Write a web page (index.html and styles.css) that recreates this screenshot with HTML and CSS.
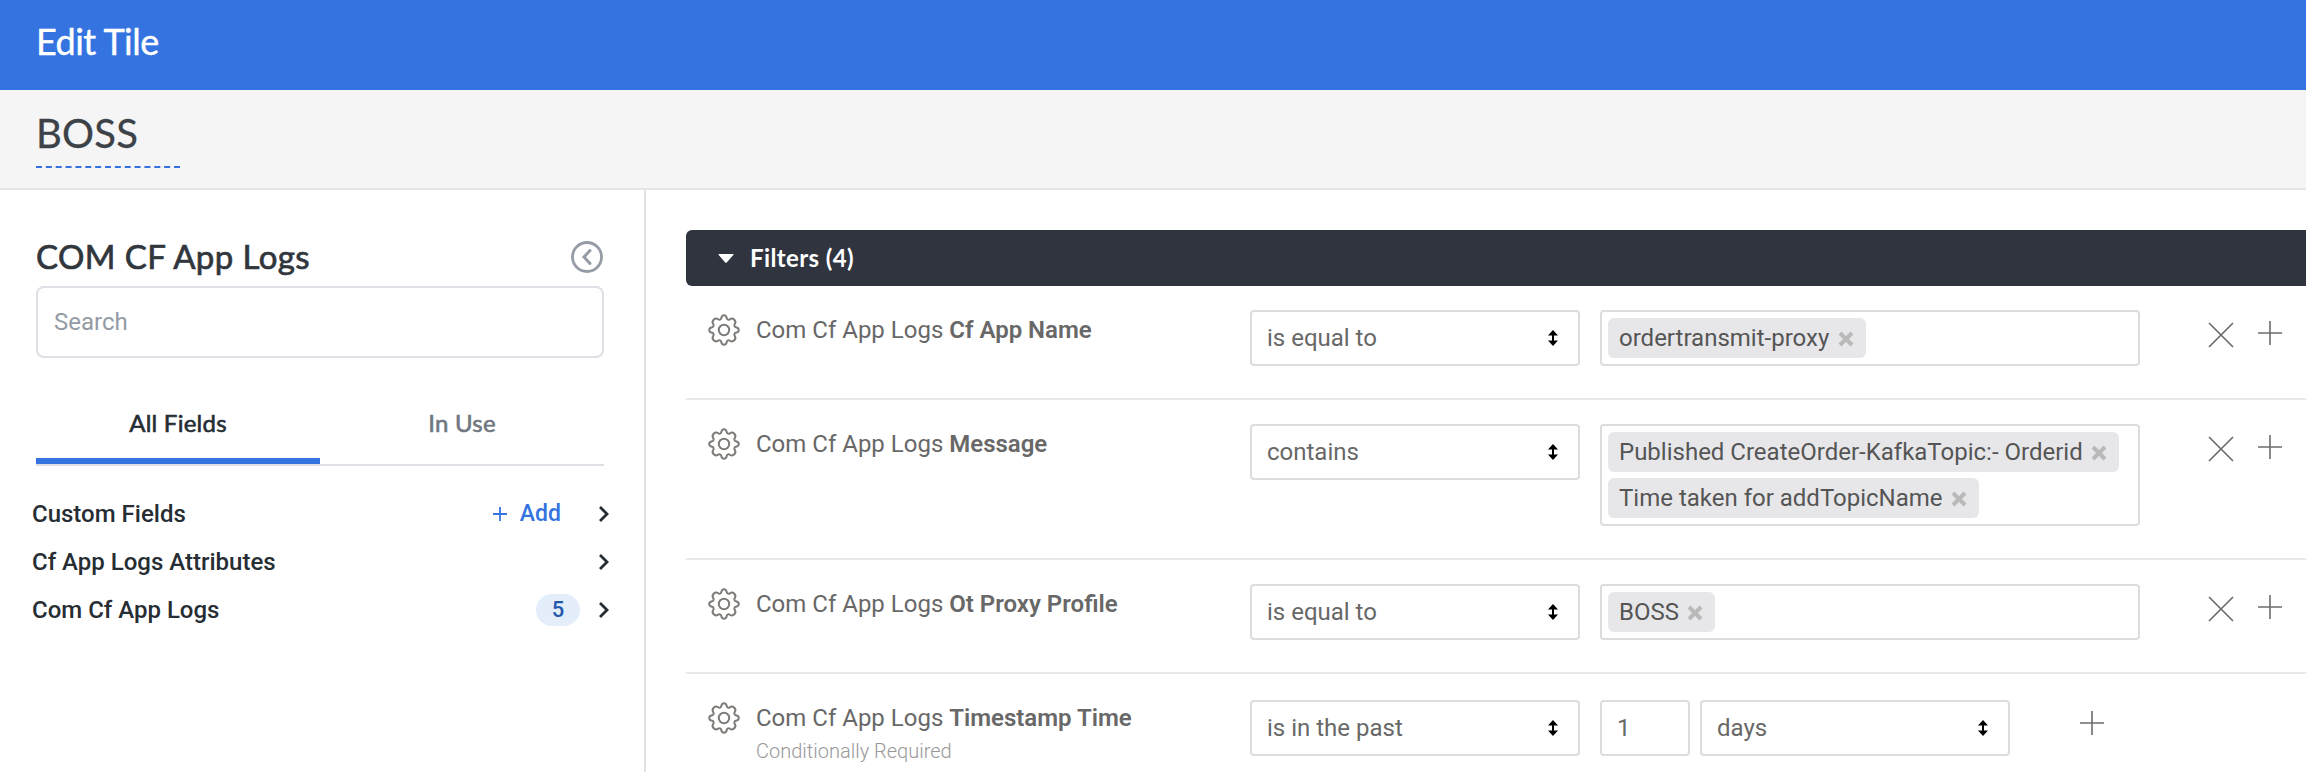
FILE: index.html
```html
<!DOCTYPE html>
<html lang="en">
<head>
<meta charset="utf-8">
<title>Edit Tile</title>
<link rel="stylesheet" href="styles.css">
</head>
<body>
<svg class="defs" width="0" height="0" aria-hidden="true">
  <symbol id="gear" viewBox="0 0 32 32">
    <path d="M13.2 4.2C13.6 2.2 14.4 1.2 16 1.2S18.4 2.2 18.8 4.2C19.1 5.6 20.6 6.1 21.8 5.3C23.4 4.200 24.8 4.200 26.300 5.700S27.800 8.600 26.700 10.200C25.900 11.400 26.400 12.900 27.800 13.200C29.800 13.600 30.800 14.400 30.800 16S29.800 18.400 27.800 18.800C26.400 19.100 25.900 20.600 26.700 21.800C27.800 23.400 27.800 24.800 26.300 26.300S23.400 27.800 21.800 26.700C20.600 25.900 19.100 26.400 18.800 27.800C18.400 29.800 17.600 30.800 16 30.800S13.600 29.800 13.200 27.800C12.900 26.400 11.400 25.900 10.200 26.700C8.600 27.800 7.200 27.800 5.700 26.300S4.200 23.400 5.300 21.800C6.100 20.600 5.600 19.100 4.200 18.800C2.200 18.400 1.200 17.600 1.200 16S2.200 13.600 4.200 13.200C5.600 12.900 6.100 11.400 5.300 10.200C4.200 8.600 4.200 7.200 5.700 5.700S8.600 4.200 10.200 5.300C11.400 6.100 12.900 5.600 13.200 4.200Z" fill="none" stroke="currentColor" stroke-width="2"/>
    <circle cx="16" cy="16" r="5.200" fill="none" stroke="currentColor" stroke-width="2"/>
  </symbol>
  <symbol id="updown" viewBox="0 0 10 16">
    <path d="M5 0L10 5.500H6V10.500H10L5 16L0 10.500H4V5.500H0Z" fill="currentColor"/>
  </symbol>
  <symbol id="times" viewBox="0 0 16 16">
    <path d="M2 2L14 14M14 2L2 14" stroke="currentColor" stroke-width="4"/>
  </symbol>
  <symbol id="cross" viewBox="0 0 26 26">
    <path d="M1 1L25 25M25 1L1 25" stroke="currentColor" stroke-width="1.700"/>
  </symbol>
  <symbol id="plus" viewBox="0 0 24 24">
    <path d="M12 0V24M0 12H24" stroke="currentColor" stroke-width="1.600"/>
  </symbol>
  <symbol id="chevron" viewBox="0 0 12 18">
    <path d="M2 2L9 9L2 16" fill="none" stroke="currentColor" stroke-width="2.800"/>
  </symbol>
</svg>

<header class="topbar"><h1 class="topbar-title">Edit Tile</h1></header>
<div class="namebar"><div class="tile-name">BOSS</div></div>

<div class="workspace">
  <aside class="sidebar">
    <div class="explore">
      <h2 class="explore-title">COM CF App Logs</h2>
      <svg class="collapse" viewBox="0 0 32 32"><circle cx="16" cy="16" r="14.500" fill="none" stroke="currentColor" stroke-width="2.800"/><path d="M19 9.500L13 16L19 22.500" fill="none" stroke="currentColor" stroke-width="3" stroke-linecap="round"/></svg>
    </div>
    <div class="search">Search</div>
    <nav class="tabs">
      <div class="tab tab-active">All Fields</div>
      <div class="tab">In Use</div>
    </nav>
    <ul class="groups">
      <li class="group"><span class="group-name">Custom Fields</span><span class="add"><svg class="add-icon" viewBox="0 0 14 14"><path d="M7 0V14M0 7H14" stroke="currentColor" stroke-width="1.800"/></svg>Add</span><svg class="chevron"><use href="#chevron"/></svg></li>
      <li class="group"><span class="group-name">Cf App Logs Attributes</span><svg class="chevron"><use href="#chevron"/></svg></li>
      <li class="group"><span class="group-name">Com Cf App Logs</span><span class="count">5</span><svg class="chevron"><use href="#chevron"/></svg></li>
    </ul>
  </aside>

  <main class="main">
    <div class="filters-head">
      <svg class="caret" viewBox="0 0 16 9"><path d="M1 0H15Q16.200 0 15.300 1L9 8.300Q8 9.300 7 8.300L.7 1Q-.2 0 1 0Z" fill="#fff"/></svg>
      <span class="filters-title">Filters (4)</span>
    </div>

    <section class="filter">
      <svg class="gear"><use href="#gear"/></svg>
      <div class="label">Com Cf App Logs <b>Cf App Name</b></div>
      <div class="select operator">is equal to<svg class="updown"><use href="#updown"/></svg></div>
      <div class="values"><span class="chip">ordertransmit-proxy<svg class="times"><use href="#times"/></svg></span></div>
      <div class="actions"><svg class="cross"><use href="#cross"/></svg><svg class="plus"><use href="#plus"/></svg></div>
    </section>

    <section class="filter">
      <svg class="gear"><use href="#gear"/></svg>
      <div class="label">Com Cf App Logs <b>Message</b></div>
      <div class="select operator">contains<svg class="updown"><use href="#updown"/></svg></div>
      <div class="values"><span class="chip">Published CreateOrder-KafkaTopic:- Orderid<svg class="times"><use href="#times"/></svg></span><span class="chip">Time taken for addTopicName<svg class="times"><use href="#times"/></svg></span></div>
      <div class="actions"><svg class="cross"><use href="#cross"/></svg><svg class="plus"><use href="#plus"/></svg></div>
    </section>

    <section class="filter">
      <svg class="gear"><use href="#gear"/></svg>
      <div class="label">Com Cf App Logs <b>Ot Proxy Profile</b></div>
      <div class="select operator">is equal to<svg class="updown"><use href="#updown"/></svg></div>
      <div class="values"><span class="chip">BOSS<svg class="times"><use href="#times"/></svg></span></div>
      <div class="actions"><svg class="cross"><use href="#cross"/></svg><svg class="plus"><use href="#plus"/></svg></div>
    </section>

    <section class="filter filter-date">
      <svg class="gear"><use href="#gear"/></svg>
      <div class="label">Com Cf App Logs <b>Timestamp Time</b><div class="hint">Conditionally Required</div></div>
      <div class="select operator">is in the past<svg class="updown"><use href="#updown"/></svg></div>
      <div class="amount">1</div>
      <div class="select unit">days<svg class="updown"><use href="#updown"/></svg></div>
      <div class="actions"><svg class="plus"><use href="#plus"/></svg></div>
    </section>
  </main>
</div>
</body>
</html>
```
FILE: styles.css
```css
* { box-sizing: border-box; }
body {
  margin: 0;
  height: 772px;
  overflow: hidden;
  display: flex;
  flex-direction: column;
  background: #fff;
  font: 24px/28px Roboto, "Liberation Sans", sans-serif;
  color: #262d33;
}
svg { display: block; flex: none; }
.defs { position: absolute; }
h1, h2, ul { margin: 0; padding: 0; font-weight: 400; list-style: none; }

.topbar { flex: none; height: 90px; padding: 20px 36px; background: #3473e0; color: #fff; }
.topbar-title { font: 400 36px/42px Lato, sans-serif; letter-spacing: -0.5px; -webkit-text-stroke: 0.4px currentColor; }

.namebar { flex: none; height: 100px; padding: 20px 36px; background: #f5f5f5; border-bottom: 2px solid #e5e5e6; }
.tile-name { width: 144px; height: 58px; border-bottom: 2px dashed #3473e0; font: 400 40px/47px Lato, sans-serif; letter-spacing: 0.2px; -webkit-text-stroke: 0.3px currentColor; color: #3c4247; }

.workspace { flex: 1; display: flex; min-height: 0; }
.sidebar { flex: none; width: 646px; padding: 46px 40px 0 36px; border-right: 2px solid #e2e2e5; }
.explore { display: flex; justify-content: space-between; align-items: flex-start; height: 50px; }
.explore-title { font: 400 33px/40px Lato, sans-serif; letter-spacing: 0.4px; -webkit-text-stroke: 0.7px currentColor; color: #31363d; }
.collapse { width: 32px; height: 32px; margin: 5px 1px 0 0; color: #959ca6; }
.search { height: 72px; padding: 0 16px; border: 2px solid #dfe0e5; border-radius: 8px; line-height: 68px; color: #939ba5; }

.tabs { display: flex; height: 56px; margin-top: 52px; border-bottom: 2px solid #dfe0e5; font: 400 24px/26px Lato, sans-serif; letter-spacing: 0.25px; -webkit-text-stroke: 0.6px currentColor; color: #707781; }
.tab { flex: 1; height: 54px; text-align: center; }
.tab-active { border-bottom: 6px solid #3473e0; color: #262d33; }

.groups { margin: 24px -6px 0 -4px; }
.group { display: flex; align-items: center; height: 48px; font-weight: 500; }
.group-name { flex: 1; }
.add { display: flex; align-items: center; gap: 13px; margin-right: 37px; font-size: 23px; color: #3473e0; }
.add-icon { width: 14px; height: 14px; }
.chevron { width: 12px; height: 18px; }
.count { width: 44px; height: 32px; margin-right: 18px; border-radius: 16px; background: #e4eefb; font-size: 22px; line-height: 31px; text-align: center; color: #2458ab; }

.main { flex: 1; min-width: 0; padding: 40px 0 0 40px; overflow: hidden; }
.filters-head { display: flex; align-items: center; height: 56px; padding-left: 32px; border-radius: 6px 0 0 6px; background: #30343f; color: #fff; }
.caret { width: 16px; height: 9px; }
.filters-title { margin-left: 16px; font: 700 24px/28px Lato, sans-serif; letter-spacing: 0.4px; }

.filter { display: flex; align-items: flex-start; padding: 24px 0 32px 22px; border-bottom: 2px solid #e9e9ea; color: #686868; }
.filter-date { padding-top: 26px; border-bottom: 0; }
.gear { width: 32px; height: 32px; margin-top: 4px; color: #7f7b78; }
.filter-date .gear { margin-top: 2px; }
.label { width: 494px; margin: 6px 0 0 16px; white-space: nowrap; }
.filter-date .label { margin-top: 4px; }
.label b { font-weight: 600; }
.hint { margin-top: 7px; font-size: 20px; font-weight: 300; line-height: 24px; color: #999; }

.select { display: flex; justify-content: space-between; align-items: center; height: 56px; padding: 0 20px 0 15px; border: 2px solid #dcdcdd; border-radius: 4px; }
.operator { width: 330px; }
.unit { width: 310px; margin-left: 10px; }
.updown { width: 10px; height: 16px; color: #000; }
.values { display: flex; flex-direction: column; align-items: flex-start; gap: 6px; width: 540px; margin-left: 20px; padding: 6px; border: 2px solid #dcdcdd; border-radius: 4px; }
.chip { display: flex; align-items: center; gap: 8.5px; height: 40px; padding: 0 12px 0 11px; border-radius: 6px; background: #e7e7e9; color: #555; white-space: nowrap; }
.times { width: 16px; height: 16px; margin-top: 2px; color: #b9b9ba; }
.amount { width: 90px; height: 56px; margin-left: 20px; padding-left: 15px; border: 2px solid #dcdcdd; border-radius: 4px; line-height: 52px; }
.actions { display: flex; gap: 24px; margin: 11px 0 0 68px; color: #6c6c6c; }
.cross { width: 26px; height: 26px; margin-top: 1px; }
.plus { width: 24px; height: 24px; }
.filter-date .actions { margin-left: 70px; }
```
